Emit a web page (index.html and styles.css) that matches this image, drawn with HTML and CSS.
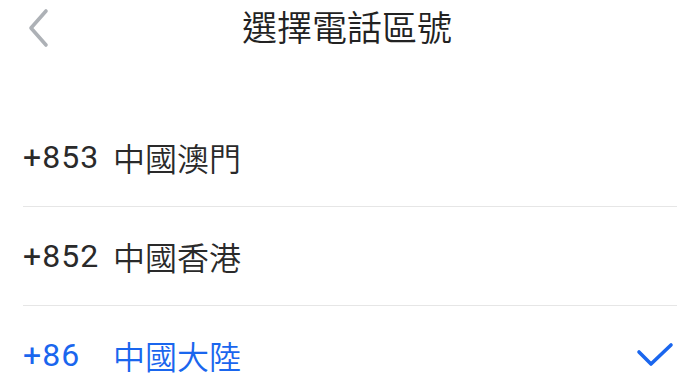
FILE: index.html
```html
<!DOCTYPE html>
<html lang="zh-Hant">
<head>
  <meta charset="UTF-8" />
  <meta name="viewport" content="width=device-width, initial-scale=1" />
  <title>選擇電話區號</title>
  <link rel="stylesheet" href="styles.css">
</head>
<body>

  <!-- Cabecera -->
  <div class="header">
    <button class="back" aria-label="返回">
      <svg width="24" height="40" viewBox="0 0 24 40">
        <polyline points="20,3 5,20 20,37" fill="none" stroke="#adb1b6" stroke-width="3.6" stroke-linecap="round" stroke-linejoin="round"/>
      </svg>
    </button>
    <h1>選擇電話區號</h1>
  </div>

  <!-- Lista de códigos -->
  <ul class="list">
    <li class="item">
      <span class="code">+853</span>
      <span class="name">中國澳門</span>
    </li>
    <li class="item">
      <span class="code">+852</span>
      <span class="name">中國香港</span>
    </li>
    <li class="item selected">
      <span class="code">+86</span>
      <span class="name">中國大陸</span>
      <svg class="check" width="38" height="26" viewBox="0 0 38 26">
        <polyline points="3,10 15,22 35,3" fill="none" stroke="#1a66ee" stroke-width="3.6" stroke-linecap="round" stroke-linejoin="round"/>
      </svg>
    </li>
  </ul>

</body>
</html>
```

FILE: styles.css
```css
body {
  font-family: Roboto, "Noto Sans CJK TC", sans-serif;
  background-color: #fff;
  color: #2a2a2a;
  margin: 0;
}

.header {
  display: flex;
  justify-content: center;
  align-items: center;
  height: 50px;
  position: relative;
}

.back {
  position: absolute;
  left: 26px;
  top: 8px;
  padding: 0;
  border: none;
  background: none;
  display: flex;
}

.header h1 {
  font-size: 35px;
  font-weight: 350;
  margin: 0 0 0 4px;
  color: #222;
}

.list {
  list-style: none;
  margin: 58px 0 0;
  padding: 0 13px 0 23px;
}

.item {
  display: flex;
  align-items: center;
  height: 98px;
  border-bottom: 1px solid #e6e6e6;
  font-size: 32px;
}

.item .code {
  width: 90px;
  letter-spacing: 1px;
}

.item .name {
  flex: 1;
  font-weight: 350;
}

.selected {
  color: #1a66ee;
  border-bottom: none;
}

.check {
  margin-right: 3px;
}
```
